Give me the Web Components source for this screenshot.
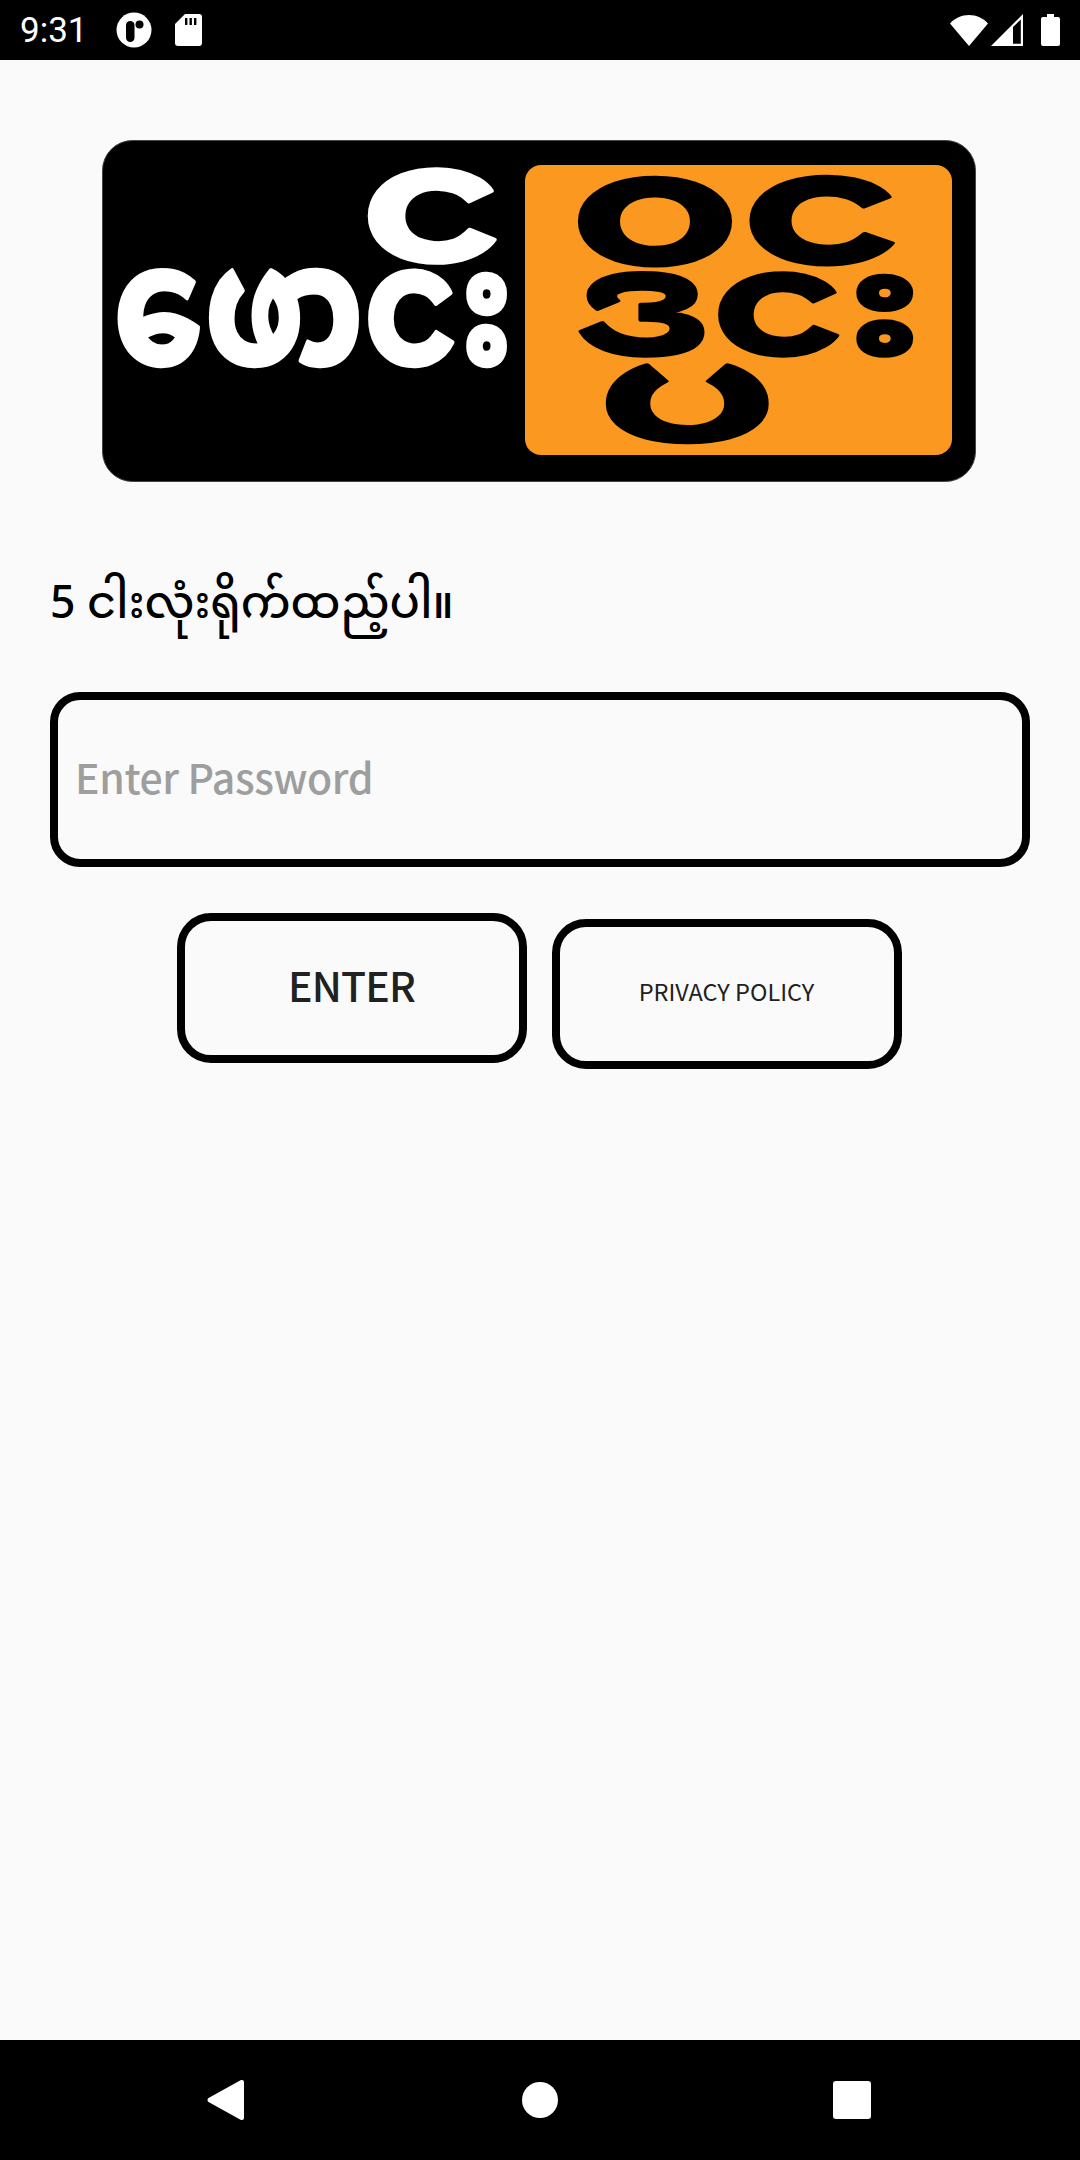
<!doctype html>
<html lang="my"><head><meta charset="utf-8"><title>Login</title>
<style>
html,body{margin:0;padding:0;height:2160px;background:#fafafa}
body{display:flex;flex-direction:column;font-family:"Noto Sans","Noto Sans Myanmar",Padauk,sans-serif;overflow:hidden}
</style></head><body>
<app-status></app-status>
<app-main>
  <app-logo></app-logo>
  <app-heading>5 ငါးလုံးရိုက်ထည့်ပါ။</app-heading>
  <app-field placeholder="Enter Password"></app-field>
  <app-actions>
    <app-button size="41" weight="500" lift="8" track="-0.8">ENTER</app-button>
    <app-button size="23.500" weight="400" lift="6" track="0" low>PRIVACY POLICY</app-button>
  </app-actions>
</app-main>
<app-nav></app-nav>
<script>
function def(name,html,init){customElements.define(name,class extends HTMLElement{
  constructor(){super();this.attachShadow({mode:'open'}).innerHTML=html;}
  connectedCallback(){init&&init(this)}
})}
def('app-status',`<style>
:host{display:flex;align-items:center;height:60px;background:#000;color:#fff;flex:none;padding:0 20px;box-sizing:border-box}
.t{font:35px Roboto,sans-serif;width:96px}
svg{display:block;fill:#fff}
.sp{flex:1}
</style>
<span class="t">9:31</span>
<svg width="36" height="36" viewBox="0 0 36 36" style="margin-right:23px"><circle cx="18" cy="18" r="17.5"/><rect x="10" y="9" width="8.5" height="21" rx="4.2" fill="#000"/><circle cx="23.5" cy="12.5" r="4" fill="#000"/></svg>
<svg width="27" height="32" viewBox="0 0 27 32"><path d="M10 0H24a3 3 0 0 1 3 3V29a3 3 0 0 1-3 3H3a3 3 0 0 1-3-3V10Z"/><path d="M10 4h2.4v7H10zM14.5 4h2.4v7h-2.4zM19 4h2.4v7H19z" fill="#000"/></svg>
<span class="sp"></span>
<svg width="38" height="32" viewBox="0 0 38 32" style="margin-right:3px"><path d="M0 9.5C5 4 11.500 1 19 1s14 3 19 8.500L19 32Z"/></svg>
<svg width="32" height="32" viewBox="0 0 32 32" style="margin-right:18px"><path fill-rule="evenodd" d="M0 32 32 0V32ZM22 13V29.800H29.800V5.400Z"/></svg>
<svg width="19" height="32" viewBox="0 0 19 32"><path d="M6 0h7v3h4a2 2 0 0 1 2 2V30a2 2 0 0 1-2 2H2a2 2 0 0 1-2-2V5a2 2 0 0 1 2-2h4Z"/></svg>`);
def('app-main',`<style>:host{display:flex;flex-direction:column;flex:1;padding:80px 50px 0;box-sizing:border-box;background:#fafafa}</style><slot></slot>`);
const LOGO=[ // text, x0,y0,x1,y1 (page pixels), colour
 ['ဖောငး',117,268,507,368,'#fff'],
 ['င',367,167,497,266,'#fff'],
 ['ဝင',577,175,895,268,'#000'],
 ['ဒငး',578,270,913,358,'#000'],
 ['ပ',605,362,770,445,'#000'],
];
const LF='700 100px "Noto Sans Myanmar",Padauk,"Noto Sans",sans-serif';
def('app-logo',`<style>
:host{display:block;align-self:center;width:874px;height:342px;margin-left:-2px}
svg{display:block;overflow:visible}
text{font:${LF}}
</style><svg width="874" height="342" viewBox="102 140 874 342" role="img">
<rect x="102.500" y="140.500" width="873" height="341" rx="30" fill="#000" stroke="#444" stroke-width="1"/>
<rect x="525" y="165" width="427" height="290" rx="16" fill="#fa981f"/>
<g id="g"></g></svg>`,el=>{
  const g=el.shadowRoot.getElementById('g');
  const ctx=document.createElement('canvas').getContext('2d');
  ctx.font=LF;
  const ns='http://www.w3.org/2000/svg', sw=4;
  for(const [s,x0,y0,x1,y1,c] of LOGO){
    const m=ctx.measureText(s);
    const w=m.actualBoundingBoxLeft+m.actualBoundingBoxRight, h=m.actualBoundingBoxAscent+m.actualBoundingBoxDescent;
    const sx=(x1-x0-sw)/w, sy=(y1-y0-sw)/h;
    const t=document.createElementNS(ns,'text');
    t.textContent=s;
    t.setAttribute('fill',c);t.setAttribute('stroke',c);t.setAttribute('stroke-width',sw);t.setAttribute('stroke-linejoin','round');
    t.style.vectorEffect='non-scaling-stroke';
    t.setAttribute('transform',`translate(${x0+sw/2+m.actualBoundingBoxLeft*sx} ${y0+sw/2+m.actualBoundingBoxAscent*sy}) scale(${sx} ${sy})`);
    g.appendChild(t);
  }
});
def('app-heading',`<style>:host{display:block;margin-top:75px;height:88px;font-size:44.5px;line-height:88px;color:#000;font-weight:500;white-space:nowrap}</style><slot></slot>`);
def('app-field',`<style>
:host{display:block;margin-top:47px;height:175px}
input{display:block;width:100%;height:100%;box-sizing:border-box;border:8px solid #000;border-radius:30px;background:transparent;padding:0 17px 8px;font:500 41px "Noto Sans CJK SC","Noto Sans",sans-serif;letter-spacing:-.4px;color:#000;outline:none}
input::placeholder{color:#9e9e9e;opacity:1}
</style><input type="password">`,el=>{el.shadowRoot.querySelector('input').placeholder=el.getAttribute('placeholder')});
def('app-actions',`<style>:host{display:flex;justify-content:center;align-items:flex-start;gap:26px;margin-top:46px;padding-right:2px}</style><slot></slot>`);
def('app-button',`<style>
:host{display:block;width:350px;height:150px}
:host([low]){margin-top:6px;margin-left:-1px}
button{width:100%;height:100%;background:transparent;border:8px solid #000;border-radius:34px;color:#212121;font-family:"Noto Sans CJK SC","Noto Sans",sans-serif;padding:0;display:flex;align-items:center;justify-content:center;box-sizing:border-box}
</style><button><slot></slot></button>`,el=>{const b=el.shadowRoot.querySelector('button');b.style.fontSize=el.getAttribute('size')+'px';b.style.fontWeight=el.getAttribute('weight');b.style.paddingBottom=el.getAttribute('lift')+'px';b.style.letterSpacing=el.getAttribute('track')+'px'});
def('app-nav',`<style>
:host{display:flex;height:120px;flex:none;background:#000;justify-content:flex-start;align-items:center;box-sizing:border-box;padding-left:207px}
svg{display:block;fill:#fff}
</style>
<svg width="37" height="40" viewBox="0 0 37 40" style="margin-right:278px"><path d="M35 0a2 2 0 0 1 2 2V38a2 2 0 0 1-2 2h-1L1.500 22a2.500 2.500 0 0 1 0-4L34 0Z"/></svg>
<svg width="36" height="36" viewBox="0 0 36 36" style="margin-right:275px"><circle cx="18" cy="18" r="18"/></svg>
<svg width="38" height="38" viewBox="0 0 38 38"><rect width="38" height="38" rx="3"/></svg>`);
</script>
</body></html>
